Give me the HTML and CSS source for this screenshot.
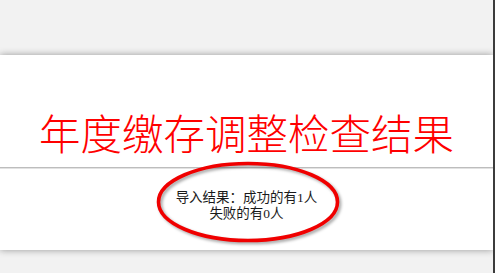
FILE: index.html
```html
<!DOCTYPE html>
<html lang="zh-CN">
<head>
<meta charset="utf-8">
<title>年度缴存调整检查结果</title>
<link rel="stylesheet" href="styles.css">
</head>
<body>
<div class="frame">
  <div class="main">
    <div class="panel">
      <div class="title">年度缴存调整检查结果</div>
      <div class="result">
        <div class="line">导入结果：成功的有1人</div>
        <div class="line">失败的有0人</div>
        <svg class="mark" width="190" height="88" viewBox="0 0 190 88" aria-hidden="true">
          <ellipse cx="93" cy="42" rx="89.5" ry="38.5" fill="none" stroke="#f00000" stroke-width="3.6"/>
        </svg>
      </div>
    </div>
  </div>
  <div class="edge"></div>
</div>
</body>
</html>
```
FILE: styles.css
```css
html, body {
  margin: 0;
  padding: 0;
}
body {
  background: #f2f2f2;
  width: 495px;
  height: 273px;
  overflow: hidden;
}
.frame {
  display: flex;
  height: 273px;
}
.main {
  flex: 1;
  padding-top: 55px;
  overflow: hidden;
}
.panel {
  background: #ffffff;
  box-shadow: 0 0 7px rgba(0, 0, 0, 0.38);
  height: 195px;
  display: flex;
  flex-direction: column;
}
.title {
  padding: 53px 0 11px;
  line-height: 48px;
  font-size: 41.5px;
  color: #ff0000;
  text-align: center;
  font-family: "Noto Sans CJK SC", "Liberation Serif", serif;
  font-weight: 300;
  border-bottom: 1px solid #bdbdbd;
  box-shadow: 0 1px 0 #e2e2e2;
}
.result {
  position: relative;
  flex: 1;
  padding-top: 22px;
  text-align: center;
  font-family: "Liberation Serif", "Noto Sans CJK SC", serif;
  font-size: 13.5px;
  line-height: 16px;
  color: #1a1a1a;
}
.mark {
  position: absolute;
  left: 155px;
  top: -8px;
  filter: drop-shadow(2px 2px 1.5px rgba(0, 0, 0, 0.35));
}
.edge {
  width: 2px;
  background: #3c3c3c;
}
```
